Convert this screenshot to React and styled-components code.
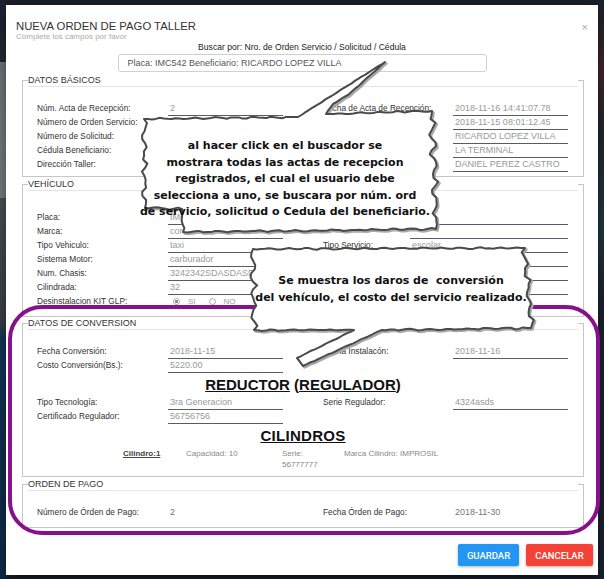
import React from 'react';
import styled, { createGlobalStyle } from 'styled-components';

const GlobalStyle = createGlobalStyle`
  html, body { margin: 0; padding: 0; }
  body { background: #1a1f2b; font-family: "Liberation Sans", Arial, sans-serif; }
`;

const Page = styled.div`
  position: relative;
  width: 604px;
  height: 579px;
  overflow: hidden;
  box-sizing: border-box;
  padding: 5px 6px 0 6px;
  background:
    linear-gradient(to bottom, #1b2130 0, #262b35 62px, #74777c 62px, #7d7f83 198px, #4d5055 198px, #3d4249 318px, #153757 340px, #0f2b47 579px) left top / 6px 100% no-repeat,
    linear-gradient(to bottom, #1c2230 0, #45262a 70px, #232833 130px, #1f3b44 230px, #1c2432 300px, #1a2231 579px) right top / 6px 100% no-repeat,
    #1a1f2b;
`;

const Modal = styled.div`
  width: 592px;
  height: 570px;
  background: #fff;
  box-sizing: border-box;
  box-shadow: 0 5px 15px rgba(0, 0, 0, 0.5);
  display: flex;
  flex-direction: column;
`;

const Header = styled.div`
  display: flex;
  justify-content: space-between;
  align-items: flex-start;
  padding: 15px 10px 0 10px;
`;

const Title = styled.div`
  font-size: 11.3px;
  line-height: 12px;
  color: #333;
`;

const Subtitle = styled.div`
  font-size: 8px;
  line-height: 9px;
  color: #aaa;
`;

const Close = styled.span`
  font-size: 11px;
  line-height: 12px;
  color: #aaa;
  margin-top: 1px;
`;

const SearchLabel = styled.div`
  margin-top: 1px;
  text-align: center;
  font-size: 8.6px;
  line-height: 10px;
  color: #222;
`;

const SearchInput = styled.input`
  display: block;
  margin: 2px auto 0;
  width: 369px;
  height: 18px;
  box-sizing: border-box;
  border: 1px solid #d0d0d0;
  border-radius: 3px;
  padding: 0 0 0 9px;
  font-family: "Liberation Sans", Arial, sans-serif;
  font-size: 9px;
  color: #555;
  outline: none;
  background: #fff;
`;

const Body = styled.div`
  padding: 0 14px 0 16px;
`;

const Fieldset = styled.fieldset`
  margin: ${(p) => p.$mt || 0}px 0 0 0;
  padding: 0 5px ${(p) => p.$pb || 0}px 5px;
  border: 1px solid #c6c6c6;
  min-width: 0;
`;

const Legend = styled.legend`
  width: 100%;
  box-sizing: border-box;
  padding: 0;
  margin: 0;
  font-size: 9px;
  line-height: 12px;
  color: #333;
  border-bottom: 1px solid #e5e5e5;
`;

const Rows = styled.div`
  margin: ${(p) => p.$mt || 0}px 0 0 9px;
  width: 531px;
`;

const Row = styled.div`
  display: grid;
  grid-template-columns: ${(p) => p.$cols || '131px 115px 40px 130px 115px'};
  height: 14px;
`;

const Label = styled.div`
  grid-column: ${(p) => (p.$right ? 4 : 1)};
  font-size: 8.3px;
  line-height: 13px;
  color: #333;
  white-space: nowrap;
`;

const Value = styled.div`
  grid-column: ${(p) => (p.$right ? 5 : 2)};
  height: 13px;
  line-height: 13px;
  font-size: 9px;
  color: ${(p) => (p.$plain ? '#777' : '#999')};
  padding-left: 2px;
  white-space: nowrap;
  border-bottom: 1px solid ${(p) => (p.$plain ? 'transparent' : '#5a5a66')};
`;

const RadioGroup = styled.div`
  display: flex;
  align-items: center;
  height: 13px;
  padding-left: 5px;
  font-size: 8px;
  color: #999;
`;

const Radio = styled.span`
  width: 5px;
  height: 5px;
  border-radius: 50%;
  border: 1px solid #aaa;
  margin-right: 8px;
  margin-left: ${(p) => p.$ml || 0}px;
  background: ${(p) => (p.$checked ? 'radial-gradient(circle, #888 0 1.3px, transparent 1.8px)' : 'transparent')};
`;

const Heading = styled.div`
  text-align: center;
  font-size: 15px;
  line-height: 23px;
  font-weight: bold;
  color: #111;
  letter-spacing: ${(p) => p.$ls || 0}px;
  u { text-decoration-thickness: 1px; text-underline-offset: 1px; }
`;

const CylRow = styled.div`
  display: grid;
  grid-template-columns: 63px 96px 62px auto;
  padding-left: 95px;
  margin-top: 1px;
  font-size: 8px;
  line-height: 11px;
  color: #888;
`;

const CylName = styled.span`
  color: #444;
  font-weight: bold;
  text-decoration: underline;
`;

const Footer = styled.div`
  display: flex;
  justify-content: flex-end;
  gap: 7px;
  margin-top: 16px;
  padding-right: 5px;
`;

const Button = styled.button`
  height: 22px;
  padding: 0 8px;
  border: none;
  border-radius: 2px;
  background: ${(p) => p.$bg};
  color: #fff;
  font-family: Roboto, "Liberation Sans", Arial, sans-serif;
  font-weight: 500;
  font-size: 9.5px;
  box-shadow: 0 1px 3px rgba(0, 0, 0, 0.3);
  min-width: ${(p) => p.$w}px;
`;

const Highlight = styled.div`
  position: absolute;
  left: 8px;
  top: 305px;
  width: 592px;
  height: 230px;
  box-sizing: border-box;
  border: 4px solid #86118a;
  border-radius: 34px;
  pointer-events: none;
`;

const Overlay = styled.svg`
  position: absolute;
  left: 0;
  top: 0;
  pointer-events: none;
`;

const CalloutText = styled.div`
  position: absolute;
  left: ${(p) => p.$x}px;
  top: ${(p) => p.$y}px;
  width: ${(p) => p.$w}px;
  text-align: center;
  font-family: "DejaVu Sans", Verdana, sans-serif;
  font-weight: bold;
  font-size: 11px;
  line-height: ${(p) => p.$lh}px;
  color: #111;
  white-space: pre;
  pointer-events: none;
`;

function roughPath(pts, seed) {
  let s = seed;
  const rnd = () => {
    s = (s * 16807) % 2147483647;
    return s / 2147483647;
  };
  const out = [];
  for (let i = 0; i < pts.length; i++) {
    const [x0, y0, amp = 0.8] = pts[i];
    const [x1, y1] = pts[(i + 1) % pts.length];
    const dx = x1 - x0;
    const dy = y1 - y0;
    const len = Math.hypot(dx, dy);
    const steps = Math.max(1, Math.round(len / 4));
    const nx = -dy / len;
    const ny = dx / len;
    for (let k = 0; k < steps; k++) {
      const t = k / steps;
      const o = k === 0 ? 0 : (Math.sin(k * 1.3) * 0.6 + (rnd() - 0.5)) * amp * 1.6;
      out.push([x0 + dx * t + nx * o, y0 + dy * t + ny * o]);
    }
  }
  return 'M' + out.map((p) => p[0].toFixed(1) + ' ' + p[1].toFixed(1)).join(' L') + ' Z';
}

const bubble1 = roughPath(
  [
    [144, 119, 0.6],
    [298, 117, 0.2],
    [385, 62, 0.2],
    [348, 95, 0.2],
    [333, 104, 0.2],
    [326, 114, 0.6],
    [432, 111, 2.2],
    [436, 229, 0.6],
    [183, 232, 1.4],
    [182, 209, 1.0],
    [145, 208, 2.2],
  ],
  12345
);

const bubble2 = roughPath(
  [
    [253, 249, 0.6],
    [525, 248, 2.2],
    [531, 328, 0.6],
    [382, 330, 0.2],
    [303, 366, 0.3],
    [297, 358, 0.2],
    [354, 330, 0.6],
    [254, 330, 2.2],
  ],
  67891
);

const basicRows = [
  ['Núm. Acta de Recepción:', '2', 'Fecha de Acta de Recepción:', '2018-11-16 14:41:07.78'],
  ['Número de Orden Servicio:', '', '', '2018-11-15 08:01:12.45'],
  ['Número de Solicitud:', '', '', 'RICARDO LOPEZ VILLA'],
  ['Cédula Beneficiario:', '', '', 'LA TERMINAL'],
  ['Dirección Taller:', '', '', 'DANIEL PEREZ CASTRO'],
];

const vehicleRows = [
  ['Placa:', 'IMC542', '', ''],
  ['Marca:', 'corolla', '', ''],
  ['Tipo Vehiculo:', 'taxi', 'Tipo Servicio:', 'escolar'],
  ['Sistema Motor:', 'carburador', '', ''],
  ['Num. Chasis:', '3242342SDASDASDDAAAA', '', ''],
  ['Cilindrada:', '32', '', ''],
];

const VEH_COLS = '131px 115px 40px 87px 158px';

function Field({ row, cols, plain }) {
  const [l1, v1, l2, v2] = row;
  return (
    <Row $cols={cols}>
      <Label>{l1}</Label>
      <Value $plain={plain}>{v1}</Value>
      {l2 ? <Label $right>{l2}</Label> : null}
      {v2 !== undefined && (
        <Value $right $plain={plain}>
          {v2}
        </Value>
      )}
    </Row>
  );
}

export default function App() {
  return (
    <>
      <GlobalStyle />
      <Page>
        <Modal>
          <Header>
            <div>
              <Title>NUEVA ORDEN DE PAGO TALLER</Title>
              <Subtitle>Complete los campos por favor</Subtitle>
            </div>
            <Close>×</Close>
          </Header>
          <SearchLabel>Buscar por: Nro. de Orden Servicio / Solicitud / Cédula</SearchLabel>
          <SearchInput readOnly value="Placa: IMC542 Beneficiario: RICARDO LOPEZ VILLA" />
          <Body>
            <Fieldset $mt={2} $pb={4}>
              <Legend>DATOS BÁSICOS</Legend>
              <Rows $mt={15}>
                {basicRows.map((r, i) => (
                  <Field key={i} row={r} />
                ))}
              </Rows>
            </Fieldset>

            <Fieldset $mt={1} $pb={7}>
              <Legend>VEHÍCULO</Legend>
              <Rows $mt={20}>
                {vehicleRows.map((r, i) => (
                  <Field key={i} row={r} cols={VEH_COLS} />
                ))}
                <Row $cols={VEH_COLS}>
                  <Label>Desinstalacion KIT GLP:</Label>
                  <RadioGroup>
                    <Radio $checked />
                    SI
                    <Radio $ml={13} />
                    NO
                  </RadioGroup>
                </Row>
              </Rows>
            </Fieldset>

            <Fieldset $pb={6}>
              <Legend>DATOS DE CONVERSION</Legend>
              <Rows $mt={15}>
                <Field row={['Fecha Conversión:', '2018-11-15', 'Fecha Instalacón:', '2018-11-16']} />
                <Field row={['Costo Conversión(Bs.):', '5220.00']} />
              </Rows>
              <Heading>
                <u>REDUCTOR</u> (<u>REGULADOR</u>)
              </Heading>
              <Rows>
                <Field row={['Tipo Tecnología:', '3ra Generacion', 'Serie Regulador:', '4324asds']} />
                <Field row={['Certificado Regulador:', '56756756']} />
              </Rows>
              <Heading $ls={0.3}>
                <u>CILINDROS</u>
              </Heading>
              <CylRow>
                <div>
                  <CylName>Cilindro:1</CylName>
                </div>
                <div>Capacidad: 10</div>
                <div>
                  Serie:
                  <br />
                  56777777
                </div>
                <div>Marca Cilindro: IMPROSIL</div>
              </CylRow>
            </Fieldset>

            <Fieldset $mt={1} $pb={7}>
              <Legend>ORDEN DE PAGO</Legend>
              <Rows $mt={15}>
                <Field plain row={['Número de Órden de Pago:', '2', 'Fecha Órden de Pago:', '2018-11-30']} />
              </Rows>
            </Fieldset>
          </Body>
          <Footer>
            <Button $bg="#2196f3" $w={61}>GUARDAR</Button>
            <Button $bg="#f44336" $w={67}>CANCELAR</Button>
          </Footer>
        </Modal>

        <Highlight />

        <Overlay width="604" height="579" viewBox="0 0 604 579">
          <g transform="translate(1.5 1.5)">
            <path d={bubble1} fill="none" stroke="#a9a9a9" strokeWidth="2.5" strokeLinejoin="round" />
            <path d={bubble2} fill="none" stroke="#a9a9a9" strokeWidth="2.5" strokeLinejoin="round" />
          </g>
          <path d={bubble1} fill="#fff" stroke="#4a4a4a" strokeWidth="2" strokeLinejoin="round" />
          <path d={bubble2} fill="#fff" stroke="#4a4a4a" strokeWidth="2" strokeLinejoin="round" />
        </Overlay>

        <CalloutText $x={135} $y={138} $w={300} $lh={16.5}>
          {'al hacer click en el buscador se\nmostrara todas las actas de recepcion\nregistrados, el cual el usuario debe\nselecciona a uno, se buscara por núm. ord\nde servicio, solicitud o Cedula del beneficiario.'}
        </CalloutText>
        <CalloutText $x={241} $y={271.5} $w={300} $lh={17}>
          {'Se muestra los daros de  conversión\ndel vehículo, el costo del servicio realizado.'}
        </CalloutText>
      </Page>
    </>
  );
}
